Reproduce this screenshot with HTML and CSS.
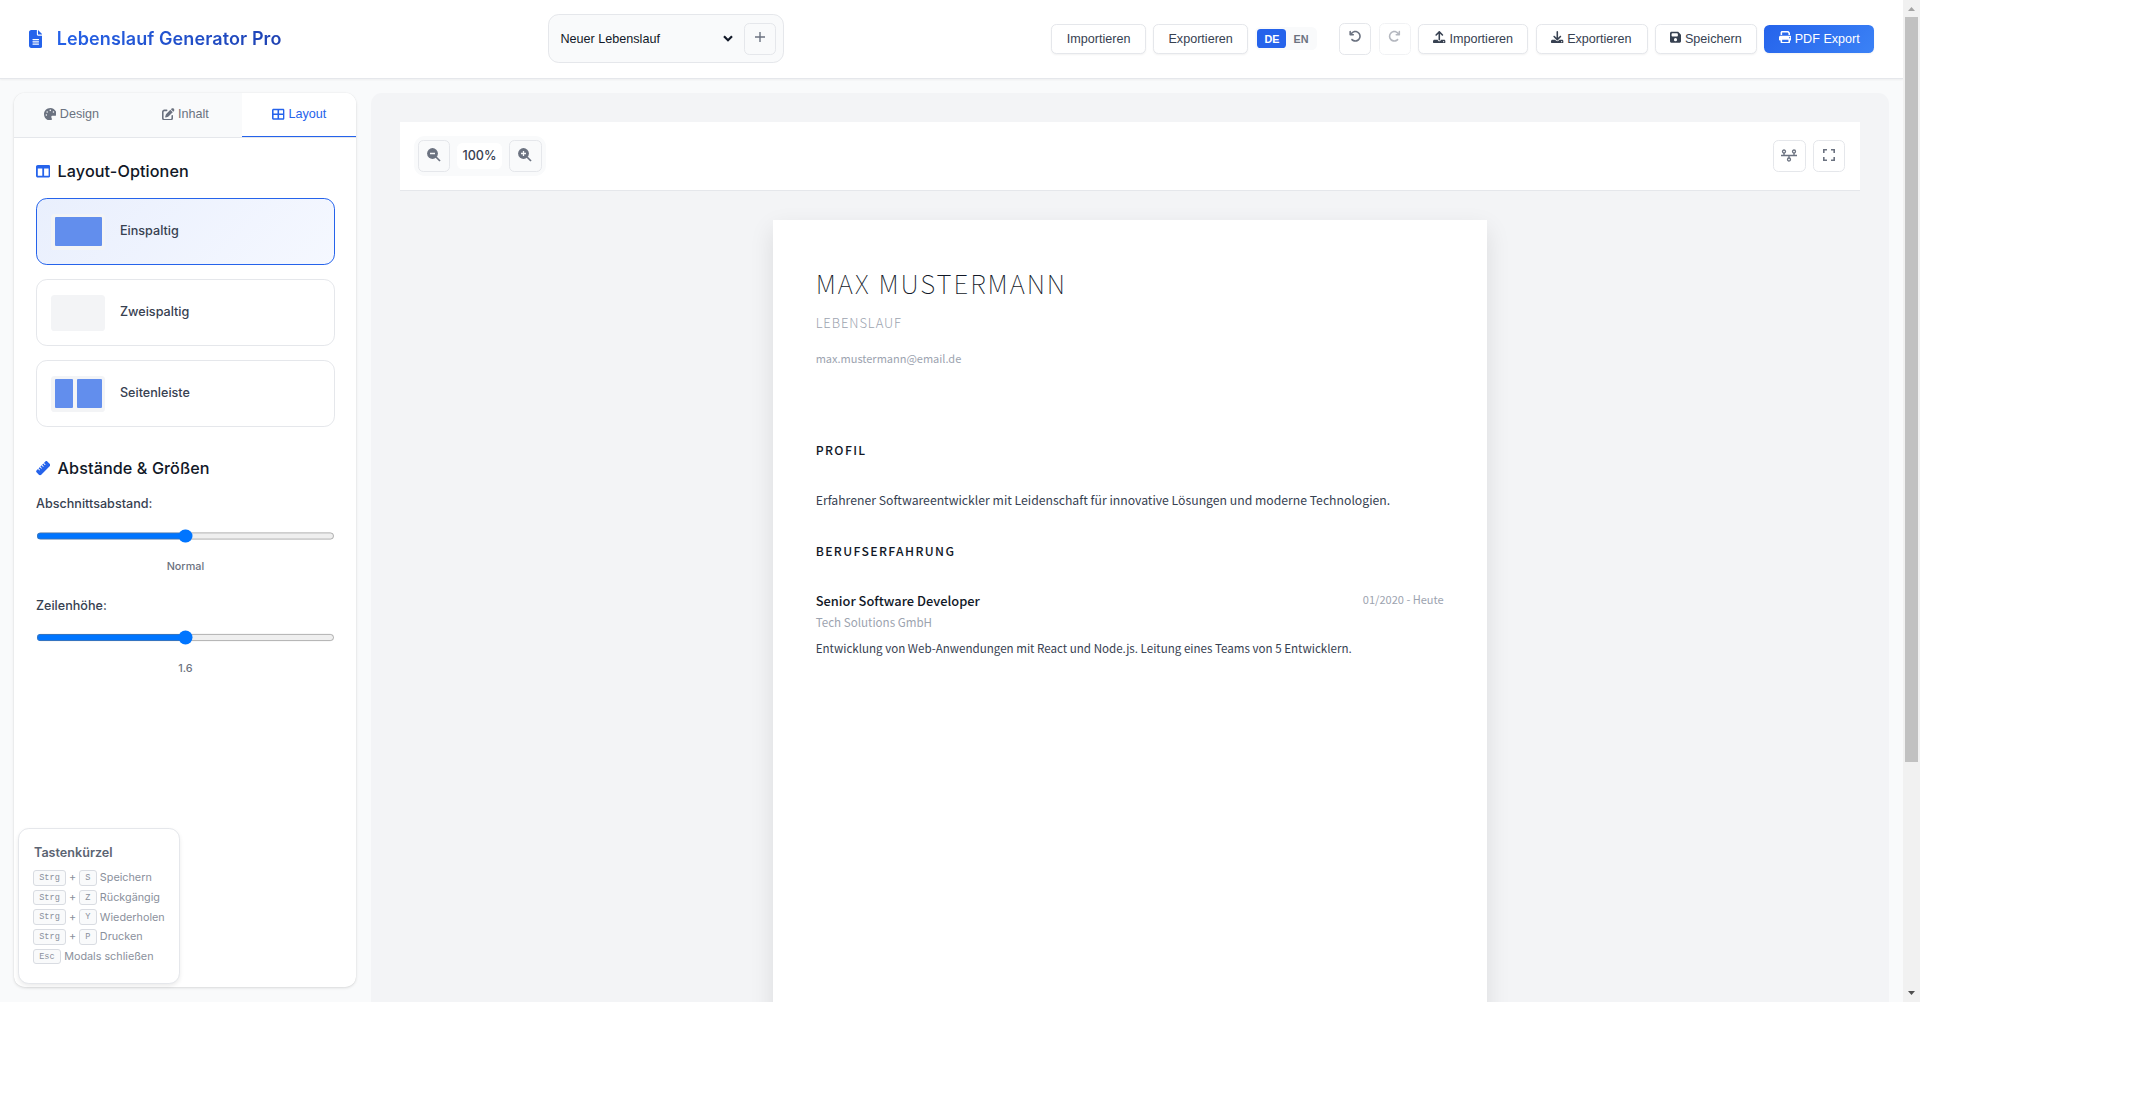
FILE: index.html
```html
<!DOCTYPE html>
<html lang="de">
<head>
<meta charset="utf-8">
<title>Lebenslauf Generator Pro</title>
<link rel="stylesheet" href="styles.css">
</head>
<body>
<svg class="sprite" aria-hidden="true">
  <symbol id="file" viewBox="0 0 384 512"><path d="M64 0C28.700 0 0 28.700 0 64V448c0 35.300 28.700 64 64 64H320c35.300 0 64-28.700 64-64V160H256c-17.700 0-32-14.300-32-32V0H64zM256 0V128H384L256 0zM112 256H272c8.800 0 16 7.200 16 16s-7.200 16-16 16H112c-8.800 0-16-7.200-16-16s7.200-16 16-16zm0 64H272c8.800 0 16 7.200 16 16s-7.200 16-16 16H112c-8.800 0-16-7.200-16-16s7.200-16 16-16zm0 64H272c8.800 0 16 7.200 16 16s-7.200 16-16 16H112c-8.800 0-16-7.200-16-16s7.200-16 16-16z"/></symbol>
  <symbol id="palette" viewBox="0 0 512 512"><path d="M512 256c0 .9 0 1.800 0 2.700c-.4 36.500-33.600 61.300-70.100 61.300H344c-26.500 0-48 21.500-48 48c0 3.400 .4 6.700 1 9.900c2.100 10.200 6.500 20 10.800 29.900c6.100 13.800 12.100 27.500 12.100 42c0 31.800-21.600 60.700-53.400 62c-3.500 .1-7 .2-10.600 .2C114.600 512 0 397.400 0 256S114.600 0 256 0S512 114.600 512 256zM128 288a32 32 0 1 0 -64 0 32 32 0 1 0 64 0zm0-96a32 32 0 1 0 0-64 32 32 0 1 0 0 64zM288 96a32 32 0 1 0 -64 0 32 32 0 1 0 64 0zm96 96a32 32 0 1 0 0-64 32 32 0 1 0 0 64z"/></symbol>
  <symbol id="edit" viewBox="0 0 512 512"><path d="M471.600 21.700c-21.900-21.900-57.300-21.900-79.200 0L362.300 51.700l97.900 97.900 30.100-30.100c21.900-21.900 21.900-57.300 0-79.200L471.600 21.700zm-299.200 220c-6.100 6.100-10.800 13.600-13.500 21.900l-29.600 88.800c-2.900 8.600-.6 18.100 5.800 24.600s15.900 8.700 24.600 5.800l88.800-29.600c8.200-2.700 15.700-7.400 21.900-13.500L437.700 172.300 339.700 74.300 172.400 241.700zM96 64C43 64 0 107 0 160V416c0 53 43 96 96 96H352c53 0 96-43 96-96V320c0-17.700-14.300-32-32-32s-32 14.300-32 32v96c0 17.700-14.300 32-32 32H96c-17.700 0-32-14.300-32-32V160c0-17.700 14.300-32 32-32h96c17.700 0 32-14.300 32-32s-14.300-32-32-32H96z"/></symbol>
  <symbol id="grid" viewBox="0 0 512 512"><path d="M448 96V224H288V96H448zm0 192V416H288V288H448zM224 224H64V96H224V224zM64 288H224V416H64V288zM64 32C28.700 32 0 60.700 0 96V416c0 35.300 28.700 64 64 64H448c35.300 0 64-28.700 64-64V96c0-35.300-28.700-64-64-64H64z"/></symbol>
  <symbol id="columns" viewBox="0 0 512 512"><path d="M0 96C0 60.700 28.700 32 64 32H448c35.300 0 64 28.700 64 64V416c0 35.300-28.700 64-64 64H64c-35.300 0-64-28.700-64-64V96zm64 64V416H224V160H64zm384 0H288V416H448V160z"/></symbol>
  <symbol id="ruler" viewBox="0 0 512 512"><path d="M177.900 494.100c-18.700 18.700-49.100 18.700-67.900 0L17.900 401.900c-18.700-18.700-18.700-49.100 0-67.900l50.700-50.700 48 48c6.200 6.200 16.400 6.200 22.600 0s6.200-16.400 0-22.600l-48-48 41.400-41.400 48 48c6.200 6.200 16.400 6.200 22.600 0s6.200-16.400 0-22.600l-48-48 41.400-41.400 48 48c6.200 6.200 16.400 6.200 22.600 0s6.200-16.400 0-22.600l-48-48 41.400-41.400 48 48c6.200 6.200 16.400 6.200 22.600 0s6.200-16.400 0-22.600l-48-48 50.700-50.700c18.700-18.700 49.100-18.700 67.900 0l92.100 92.100c18.700 18.700 18.700 49.100 0 67.900L177.900 494.100z"/></symbol>
  <symbol id="undo" viewBox="0 0 512 512"><path d="M125.700 160H176c17.700 0 32 14.300 32 32s-14.300 32-32 32H48c-17.700 0-32-14.300-32-32V64c0-17.700 14.300-32 32-32s32 14.300 32 32v51.200L97.600 97.600c87.500-87.500 229.300-87.500 316.800 0s87.500 229.300 0 316.800s-229.300 87.500-316.800 0c-12.500-12.500-12.500-32.800 0-45.300s32.800-12.500 45.300 0c62.500 62.500 163.800 62.500 226.300 0s62.500-163.800 0-226.300s-163.800-62.500-226.300 0L125.700 160z"/></symbol>
  <symbol id="upload" viewBox="0 0 512 512"><path d="M288 109.300V352c0 17.700-14.300 32-32 32s-32-14.300-32-32V109.300l-73.400 73.400c-12.500 12.500-32.800 12.500-45.300 0s-12.500-32.800 0-45.300l128-128c12.500-12.500 32.800-12.500 45.300 0l128 128c12.500 12.500 12.500 32.800 0 45.300s-32.800 12.500-45.300 0L288 109.300zM64 352H192c0 35.300 28.700 64 64 64s64-28.700 64-64H448c35.300 0 64 28.700 64 64v32c0 35.300-28.700 64-64 64H64c-35.300 0-64-28.700-64-64V416c0-35.300 28.700-64 64-64zM432 456a24 24 0 1 0 0-48 24 24 0 1 0 0 48z"/></symbol>
  <symbol id="download" viewBox="0 0 512 512"><path d="M288 32c0-17.700-14.300-32-32-32s-32 14.300-32 32V274.700l-73.400-73.400c-12.500-12.500-32.800-12.500-45.300 0s-12.500 32.800 0 45.300l128 128c12.500 12.500 32.800 12.500 45.300 0l128-128c12.500-12.500 12.500-32.800 0-45.300s-32.800-12.500-45.300 0L288 274.700V32zM64 352c-35.300 0-64 28.700-64 64v32c0 35.300 28.700 64 64 64H448c35.300 0 64-28.700 64-64V416c0-35.300-28.700-64-64-64H346.500l-45.300 45.300c-25 25-65.500 25-90.500 0L165.500 352H64zm368 56a24 24 0 1 1 0 48 24 24 0 1 1 0-48z"/></symbol>
  <symbol id="save" viewBox="0 0 448 512"><path d="M64 32C28.700 32 0 60.700 0 96V416c0 35.300 28.700 64 64 64H384c35.300 0 64-28.700 64-64V173.300c0-17-6.700-33.300-18.700-45.300L352 50.700C340 38.700 323.700 32 306.700 32H64zm0 96c0-17.700 14.300-32 32-32H288c17.700 0 32 14.300 32 32v64c0 17.700-14.300 32-32 32H96c-17.700 0-32-14.300-32-32V128zM224 288a64 64 0 1 1 0 128 64 64 0 1 1 0-128z"/></symbol>
  <symbol id="print" viewBox="0 0 512 512"><path d="M128 0C92.700 0 64 28.700 64 64v96h64V64H354.700L384 93.300V160h64V93.300c0-17-6.700-33.300-18.700-45.300L400 18.700C388 6.700 371.700 0 354.700 0H128zM384 352v32 64H128V384 368 352H384zm64 32h32c17.700 0 32-14.300 32-32V256c0-35.300-28.700-64-64-64H64c-35.300 0-64 28.700-64 64v96c0 17.700 14.300 32 32 32H64v64c0 35.300 28.700 64 64 64H384c35.300 0 64-28.700 64-64V384zM432 248a24 24 0 1 1 0 48 24 24 0 1 1 0-48z"/></symbol>
</svg>

<div class="app">
  <div class="viewport">
    <header class="header">
      <div class="logo"><svg class="logo-icon"><use href="#file"/></svg><span class="logo-text">Lebenslauf Generator Pro</span></div>
      <div class="cv-picker">
        <div class="cv-select"><span>Neuer Lebenslauf</span>
          <svg class="chevron" viewBox="0 0 10 7"><path d="M1 1.200 5 5.200 9 1.200" fill="none" stroke="currentColor" stroke-width="2.200"/></svg></div>
        <button class="icon-btn"><svg class="plus" viewBox="0 0 12 12"><path d="M6 1v10M1 6h10" stroke="currentColor" stroke-width="1.400"/></svg></button>
      </div>
      <div class="actions">
        <button class="btn">Importieren</button>
        <button class="btn">Exportieren</button>
        <div class="lang"><button class="lang-btn on">DE</button><button class="lang-btn">EN</button></div>
        <div class="history">
          <button class="icon-btn white"><svg class="i"><use href="#undo"/></svg></button>
          <button class="icon-btn white off"><svg class="i flip"><use href="#undo"/></svg></button>
        </div>
        <button class="btn"><svg class="i"><use href="#upload"/></svg>Importieren</button>
        <button class="btn btn-export"><svg class="i"><use href="#download"/></svg>Exportieren</button>
        <button class="btn"><svg class="i i-save"><use href="#save"/></svg>Speichern</button>
        <button class="btn primary"><svg class="i"><use href="#print"/></svg>PDF Export</button>
      </div>
    </header>

    <main class="main">
      <aside class="sidebar">
        <nav class="tabs">
          <button class="tab"><svg class="i"><use href="#palette"/></svg>Design</button>
          <button class="tab"><svg class="i"><use href="#edit"/></svg>Inhalt</button>
          <button class="tab on"><svg class="i"><use href="#grid"/></svg>Layout</button>
        </nav>
        <div class="panel">
          <h3 class="section-title"><svg class="ti"><use href="#columns"/></svg><span>Layout-Optionen</span></h3>
          <div class="options">
            <div class="option on"><div class="thumb"><i class="full"></i></div><span>Einspaltig</span></div>
            <div class="option"><div class="thumb"></div><span>Zweispaltig</span></div>
            <div class="option"><div class="thumb"><i class="narrow"></i><i class="wide"></i></div><span>Seitenleiste</span></div>
          </div>
          <h3 class="section-title second"><svg class="ti"><use href="#ruler"/></svg><span>Abstände &amp; Größen</span></h3>
          <div class="field"><label>Abschnittsabstand:</label><input type="range" min="0" max="2" value="1"><output>Normal</output></div>
          <div class="field"><label>Zeilenhöhe:</label><input type="range" min="0" max="2" value="1"><output>1.6</output></div>
        </div>
      </aside>

      <section class="preview">
        <div class="toolbar">
          <div class="zoom">
            <button class="icon-btn"><svg class="zi" viewBox="0 0 14 14"><path d="M9 9l4 4" stroke="currentColor" stroke-width="1.700"/><circle cx="5.500" cy="5.500" r="5.400" fill="currentColor"/><path d="M3 5.500h5" stroke="#f9fafb" stroke-width="1.500"/></svg></button>
            <span class="zoom-level">100%</span>
            <button class="icon-btn wider"><svg class="zi" viewBox="0 0 14 14"><path d="M9 9l4 4" stroke="currentColor" stroke-width="1.700"/><circle cx="5.500" cy="5.500" r="5.400" fill="currentColor"/><path d="M3 5.500h5M5.500 3v5" stroke="#f9fafb" stroke-width="1.300"/></svg></button>
          </div>
          <div class="tools">
            <button class="icon-btn white wider"><svg class="net" viewBox="0 0 16 13"><g fill="none" stroke="currentColor" stroke-width="1.300"><path d="M0 6.500h16M3 4v2.500M13 4v2.500M8 6.500v2.500"/><circle cx="3" cy="2.500" r="1.500"/><circle cx="13" cy="2.500" r="1.500"/><circle cx="8" cy="10.500" r="1.500"/></g></svg></button>
            <button class="icon-btn white"><svg class="expand" viewBox="0 0 12 12"><path d="M.8 4V.8H4M8 .8h3.200V4M11.200 8v3.200H8M4 11.200H.8V8" fill="none" stroke="currentColor" stroke-width="1.600"/></svg></button>
          </div>
        </div>
        <article class="page">
          <h1 class="name">MAX MUSTERMANN</h1>
          <p class="role">LEBENSLAUF</p>
          <p class="mail">max.mustermann@email.de</p>
          <h2 class="head profile">PROFIL</h2>
          <p class="summary">Erfahrener Softwareentwickler mit Leidenschaft für innovative Lösungen und moderne Technologien.</p>
          <h2 class="head work">BERUFSERFAHRUNG</h2>
          <div class="job-row"><span class="job">Senior Software Developer</span><span class="date">01/2020 - Heute</span></div>
          <p class="company">Tech Solutions GmbH</p>
          <p class="desc">Entwicklung von Web-Anwendungen mit React und Node.js. Leitung eines Teams von 5 Entwicklern.</p>
        </article>
      </section>
    </main>

    <div class="shortcuts">
      <h4>Tastenkürzel</h4>
      <div class="sc"><kbd>Strg</kbd><b>+</b><kbd>S</kbd><span>Speichern</span></div>
      <div class="sc"><kbd>Strg</kbd><b>+</b><kbd>Z</kbd><span>Rückgängig</span></div>
      <div class="sc"><kbd>Strg</kbd><b>+</b><kbd>Y</kbd><span>Wiederholen</span></div>
      <div class="sc"><kbd>Strg</kbd><b>+</b><kbd>P</kbd><span>Drucken</span></div>
      <div class="sc"><kbd>Esc</kbd><span>Modals schließen</span></div>
    </div>
  </div>
  <div class="scrollbar">
    <svg class="arrow up" viewBox="0 0 7 4"><path d="M0 4h7L3.500 0z"/></svg>
    <div class="scroll-thumb"></div>
    <svg class="arrow down" viewBox="0 0 7 4"><path d="M0 0h7L3.500 4z"/></svg>
  </div>
</div>
</body>
</html>
```
FILE: styles.css
```css
html { font-size: 14.4px; }
* { box-sizing: border-box; }
body { margin: 0; background: #fff; font-family: Inter, "Liberation Sans", sans-serif; color: #111827; }
button { font-family: "Liberation Sans", Arial, sans-serif; margin: 0; padding: 0; cursor: pointer; }
h1, h2, h3, h4, p { margin: 0; }
svg { fill: currentColor; display: block; flex: none; }
.sprite { position: absolute; width: 0; height: 0; }

.app { position: relative; display: flex; width: 1920px; height: 1002px; overflow: hidden; }
.viewport { width: 1903px; height: 1002px; background: #f9fafb; display: flex; flex-direction: column; overflow: hidden; }

/* Header */
.header { position: relative; flex: none; height: 79px; padding: 0 28.8px 1px; display: flex; align-items: center; justify-content: space-between; background: #fff; border-bottom: 1px solid #e5e7eb; box-shadow: 0 1px 2px rgba(0,0,0,.05); }
.logo { display: flex; align-items: center; gap: 14.4px; color: #2563eb; }
.logo-icon { width: 13.5px; height: 18px; }
.logo-text { font-size: 18px; line-height: 28px; font-weight: 600; letter-spacing: .1px; background: linear-gradient(135deg, #2563eb, #1e40af); -webkit-background-clip: text; background-clip: text; color: transparent; }
.cv-picker { display: flex; align-items: center; width: 236px; height: 49px; padding: 0 7px 0 11px; background: #f9fafb; border: 1px solid #e5e7eb; border-radius: 10.8px; }
.cv-select { flex: 1; display: flex; align-items: center; justify-content: space-between; padding-right: 11.5px; font: 12.6px/16px "Liberation Sans", sans-serif; }
.chevron { width: 10px; height: 7px; }
.icon-btn { width: 32px; height: 32px; display: flex; align-items: center; justify-content: center; padding-bottom: 2px; border: 1px solid #e5e7eb; border-radius: 5.4px; background: #f9fafb; color: #6b7280; }
.icon-btn.white { background: #fff; }
.icon-btn.off { opacity: .5; }
.icon-btn.wider { width: 33px; }
.header .icon-btn { padding-bottom: 4px; }
.plus { width: 12px; height: 12px; }
.i { width: 12.6px; height: 12.6px; }
.i-save { width: 11px; }
.flip { transform: scaleX(-1); }
.actions { display: flex; align-items: center; gap: 7.2px; }
.btn { height: 30px; padding: 0 14.4px; display: flex; align-items: center; gap: 3.5px; border: 1px solid #e5e7eb; border-radius: 5.4px; background: #fff; color: #374151; font-size: 12.6px; box-shadow: 0 1px 2px rgba(0,0,0,.05); }
.btn .i { margin-bottom: 3px; }
.btn-export { min-width: 112.2px; }
.btn.primary { height: 28px; border: 0; color: #fff; background: linear-gradient(135deg, #2563eb, #3b82f6); }
.lang { display: flex; align-items: center; height: 23px; padding: 2px; background: #f9fafb; border-radius: 5.4px; }
.lang-btn { width: 29px; height: 19px; border: 0; border-radius: 3.6px; background: none; color: #6b7280; font-size: 10.8px; font-weight: 700; }
.lang-btn.on { background: #2563eb; color: #fff; }
.history { display: flex; gap: 7.7px; margin-left: 14.4px; }

/* Sidebar */
.main { flex: 1; display: flex; gap: 14.4px; padding: 14.4px 14.4px 0; min-height: 0; }
.sidebar { width: 342px; height: 894px; flex: none; background: #fff; border-radius: 10.8px; overflow: hidden; box-shadow: 0 1px 3px rgba(0,0,0,.12), 0 0 1px rgba(0,0,0,.12); }
.tabs { display: flex; height: 45px; background: #f9fafb; border-bottom: 1px solid #e5e7eb; }
.tab { flex: 1; display: flex; align-items: center; justify-content: center; gap: 3.5px; padding-bottom: 1px; border: 0; border-bottom: 1px solid transparent; background: none; color: #6b7280; font-size: 12.6px; }
.tab .i { margin-bottom: 1px; }
.tab.on { background: #fff; color: #2563eb; border-bottom-color: #2563eb; }
.panel { padding: 20px 21.6px; }
.section-title { display: flex; align-items: center; gap: 7.2px; height: 26px; font-size: 16.2px; font-weight: 500; letter-spacing: .08px; color: #111827; }
.ti { width: 14.4px; height: 14.4px; color: #2563eb; }
.options { display: flex; flex-direction: column; gap: 14px; margin-top: 14px; }
.option { display: flex; align-items: center; gap: 15px; height: 67px; padding: 0 14px; border: 1px solid #e5e7eb; border-radius: 10.8px; font-size: 12.6px; font-weight: 500; color: #374151; }
.option span { padding-bottom: 2px; }
.option.on { border-color: #2563eb; background: linear-gradient(135deg, #e9effd, #f5f8ff); }
.thumb { display: flex; gap: 4px; width: 54px; height: 36px; padding: 3px 3px 4px 4px; background: #f3f4f6; border-radius: 3.6px; }
.thumb i { background: #628eed; border-radius: 1px; }
.full { flex: 1; }
.narrow { width: 18px; }
.wide { flex: 1; }
.second { margin-top: 28px; }
.field { display: flex; flex-direction: column; height: 101.5px; padding-top: 13px; }
.field label { font-size: 12.6px; line-height: 20px; font-weight: 500; color: #374151; }
.field input { zoom: .9; width: 100%; margin: 16px 0 0; height: 16px; }
.field output { margin-top: 15px; text-align: center; font-size: 10.8px; line-height: 18px; color: #6b7280; font-weight: 500; }

/* Preview */
.preview { flex: 1; background: #f3f4f6; border-radius: 10.8px 10.8px 0 0; padding: 28.8px; display: flex; flex-direction: column; align-items: center; }
.toolbar { width: 100%; flex: none; height: 69px; display: flex; align-items: center; justify-content: space-between; padding: 0 14.4px; background: #fff; border-bottom: 1px solid #e5e7eb; }
.zoom { display: flex; align-items: center; gap: 7px; padding: 4px; background: #f9fafb; border-radius: 10.8px; height: 40px; }
.zoom-level { width: 45px; height: 26px; display: flex; align-items: center; justify-content: center; padding-bottom: 2px; background: #fff; border-radius: 5.4px; font-size: 12.6px; font-weight: 500; color: #374151; }
.zi { width: 14px; height: 14px; }
.tools { display: flex; gap: 7.7px; }
.net { width: 16px; height: 13px; }
.expand { width: 12px; height: 12px; }
.page { width: 714px; height: 1010px; flex: none; margin-top: 29px; padding: 43px; background: #fff; box-shadow: 0 9px 23px rgba(0,0,0,.1); font-family: "Noto Sans CJK JP", "Noto Sans", sans-serif; color: #111827; }
.name { margin-top: 2px; height: 36px; line-height: 36px; font-size: 26.2px; font-weight: 100; letter-spacing: 1.95px; }
.role { margin-top: 12px; height: 20px; line-height: 20px; font-size: 13px; font-weight: 300; letter-spacing: .9px; color: #9ca3af; }
.mail { margin-top: 15px; height: 20px; line-height: 20px; font-size: 11px; color: #9ca3af; }
.head { height: 20px; line-height: 20px; font-size: 12.2px; font-weight: 500; letter-spacing: 1.37px; }
.profile { margin-top: 72px; }
.summary { margin-top: 30px; height: 20px; line-height: 20px; font-size: 12.22px; color: #374151; }
.work { margin-top: 31px; }
.job-row { display: flex; justify-content: space-between; margin-top: 30px; height: 20px; line-height: 20px; }
.job { font-size: 12.87px; font-weight: 500; }
.date { font-size: 11.05px; line-height: 17px; color: #9ca3af; }
.company { margin-top: 1px; height: 20px; line-height: 20px; font-size: 11.6px; color: #9ca3af; }
.desc { margin-top: 6px; height: 20px; line-height: 20px; font-size: 11.58px; color: #374151; }

/* Keyboard hints float over the sidebar */
.shortcuts { position: absolute; left: 18px; top: 828px; width: 162px; height: 156px; padding: 15px 14px; background: #fff; border: 1px solid #e5e7eb; border-radius: 10.8px; box-shadow: 0 2px 4px rgba(0,0,0,.08); color: #8a909c; }
.shortcuts h4 { margin-bottom: 6px; padding-left: 1px; font-size: 12.6px; line-height: 18px; font-weight: 600; color: #5b6472; }
.sc { display: flex; align-items: center; height: 19.7px; font-size: 10.8px; }
.sc b { width: 13px; text-align: center; font-weight: 400; }
.sc span { margin-left: 3.3px; }
kbd { height: 15.5px; padding: 0 5.2px; border: 1px solid #d9dce2; border-radius: 3px; background: #f9fafb; font: 8.6px/14px "Liberation Mono", monospace; color: #8a909c; }

/* Scrollbar */
.scrollbar { width: 17px; height: 1002px; display: flex; flex-direction: column; align-items: center; background: #f1f1f1; }
.scroll-thumb { width: 13px; height: 745px; background: #c1c1c1; }
.arrow { width: 7px; height: 4px; }
.up { margin: 7px 0 6px; color: #a3a3a3; }
.down { margin: auto 0 7px; color: #505050; }
```
